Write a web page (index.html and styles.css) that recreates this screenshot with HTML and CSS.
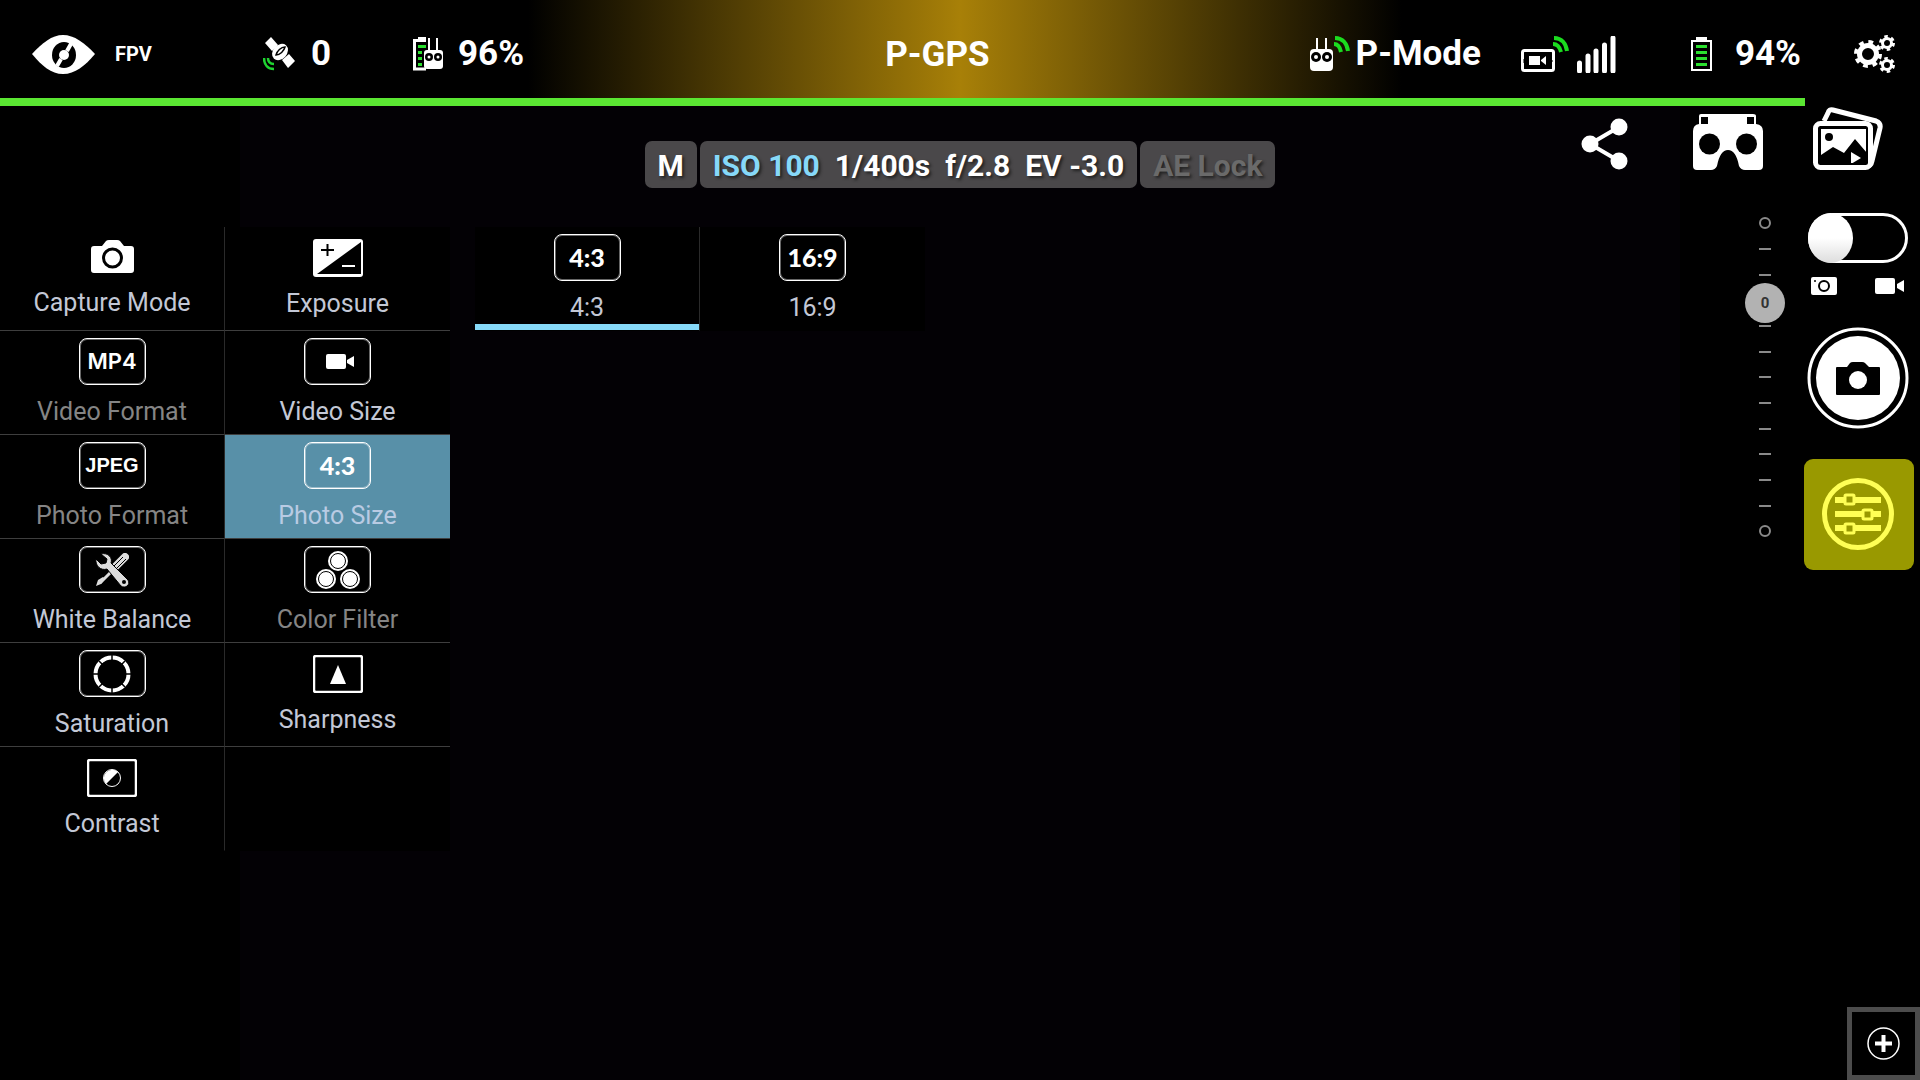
FILE: index.html
```html
<!DOCTYPE html>
<html lang="en">
<head>
<meta charset="utf-8">
<meta name="viewport" content="width=device-width, initial-scale=1">
<title>FPV</title>
<link rel="stylesheet" href="styles.css">
</head>
<body>
<header class="topbar">
    <div class="status left">
        <svg class="eye" width="63" height="39" viewBox="0 0 63 39">
            <path fill="#fff" d="M0 19C10 8 20 0 31 0s22 8 32 19C53 31 43 39 31 39S10 31 0 19z"/>
            <ellipse cx="32" cy="20" rx="12" ry="13"/>
            <path stroke="#fff" stroke-width="4" d="M25 31l4-7M35 16l5-9"/>
            <circle cx="32" cy="20" r="5" fill="#fff"/>
        </svg>
        <span class="fpv">FPV</span>
        <svg class="satellite" width="33" height="34" viewBox="0 0 33 34">
            <g fill="#fff">
                <path d="M2 6l6-6 7 8-6 6zM19 23l7-6 6 7-7 7z"/>
                <ellipse cx="17" cy="15" rx="9" ry="7" transform="rotate(-48 17 15)"/>
            </g>
            <path d="M13 18c1-4 5-8 9-8-1 4-5 8-9 8z" fill="#fff" stroke="#000" stroke-width="1.500"/>
            <path d="M5 21c0 4 2 6 6 6M1 21c0 7 4 11 10 11" fill="none" stroke="#1fd431" stroke-width="2.500"/>
        </svg>
        <span class="value">0</span>
        <svg class="remote" width="30" height="34" viewBox="0 0 30 34">
            <path d="M13 32H1.500V3.500H13" fill="none" stroke="#fff" stroke-width="3"/>
            <path d="M5 0h8v4H5zM15 1h2v13h-2zM23 1h2v13h-2z" fill="#fff"/>
            <path d="M5 8h8v3H5zM5 14h4v3H5zM5 20h4v3H5zM5 26h4v3H5z" fill="#2be02f"/>
            <rect x="11" y="13" width="19" height="19" rx="3" fill="#fff"/>
            <circle cx="16" cy="20" r="4"/><circle cx="25" cy="20" r="4"/>
            <circle cx="16" cy="20" r="1.500" fill="#fff"/><circle cx="25" cy="20" r="1.500" fill="#fff"/>
        </svg>
        <span class="value">96%</span>
    </div>
    <div class="value mode">P-GPS</div>
    <div class="status right">
        <svg class="rc" width="40" height="36" viewBox="0 0 40 36">
            <path d="M6 2h2v13H6zM15 2h2v13h-2z" fill="#fff"/>
            <rect x="0" y="13" width="23" height="22" rx="4" fill="#fff"/>
            <circle cx="6" cy="21" r="5"/><circle cx="17" cy="21" r="5"/>
            <circle cx="6" cy="21" r="2" fill="#fff"/><circle cx="17" cy="21" r="2" fill="#fff"/>
            <path d="M24 8c4 0 6 3 7 8M25 2c8 0 12 6 13 13" fill="none" stroke="#1bdc1f" stroke-width="4"/>
        </svg>
        <span class="value">P-Mode</span>
        <svg class="video-link" width="48" height="36" viewBox="0 0 48 36">
            <rect x="1.500" y="14.500" width="31" height="20" rx="2" fill="none" stroke="#fff" stroke-width="3"/>
            <path d="M8 20h11v9H8zM20 24l5-4v9l-5-4z" fill="#fff"/>
            <path d="M3 23v4M31 24v2" stroke="#000" stroke-width="1"/>
            <path d="M32 8c5 0 7 4 8 8M33 2c8 0 12 6 13 13" fill="none" stroke="#1bdc1f" stroke-width="4"/>
        </svg>
        <svg class="bars" width="39" height="37" viewBox="0 0 39 37">
            <path d="M2.500 27v8M11 20v15M19 15v20M27.500 9v26M36 2v33" stroke="#fff" stroke-width="5" stroke-linecap="round"/>
        </svg>
        <svg class="battery" width="21" height="34" viewBox="0 0 21 34">
            <path d="M5 0h11v3H5z" fill="#fff"/>
            <rect x="1" y="4" width="19" height="29" fill="none" stroke="#fff" stroke-width="2"/>
            <path d="M5 8h11v3H5zM5 14h11v3H5zM5 20h11v3H5zM5 26h11v3H5z" fill="#2be02f"/>
        </svg>
        <span class="value">94%</span>
        <button class="icon-btn settings" type="button" aria-label="Settings">
            <svg width="42" height="38" viewBox="0 0 42 38" fill="none" stroke="#fff">
                <circle cx="14" cy="19" r="8.500" stroke-width="5"/>
                <circle cx="14" cy="19" r="12" stroke-width="4" stroke-dasharray="4.712"/>
                <circle cx="33" cy="8" r="4.500" stroke-width="3"/>
                <circle cx="33" cy="8" r="6.500" stroke-width="3" stroke-dasharray="3.403"/>
                <circle cx="33" cy="30" r="4.500" stroke-width="3"/>
                <circle cx="33" cy="30" r="6.500" stroke-width="3" stroke-dasharray="3.403"/>
            </svg>
        </button>
    </div>
</header>
<div class="charge"><div class="charge-level" style="width: 94%"></div></div>

<main class="view">
    <div class="camera-info">
        <button class="info-box" type="button">M</button>
        <div class="info-box info-values">
            <span class="iso">ISO 100</span>
            <span>1/400s</span>
            <span>f/2.8</span>
            <span>EV -3.0</span>
        </div>
        <button class="info-box lock" type="button" disabled>AE Lock</button>
    </div>

    <div class="shortcuts">
        <button class="icon-btn share" type="button" aria-label="Share">
            <svg width="47" height="52" viewBox="0 0 47 52" fill="#fff">
                <path d="M38 9L9 26l29 17" fill="none" stroke="#fff" stroke-width="4"/>
                <circle cx="38" cy="9" r="8.500"/><circle cx="9" cy="26" r="8.500"/><circle cx="38" cy="43" r="8.500"/>
            </svg>
        </button>
        <button class="icon-btn" type="button" aria-label="VR goggles">
            <svg width="70" height="56" viewBox="0 0 70 56">
                <path fill="#fff" d="M6 2q0-2 2-2h52q3 0 3 2v8q7 1 7 7v35q0 4-4 4H52q-4 0-6-4-3-16-11-16t-11 16q-2 4-6 4H4q-4 0-4-4V17q0-6 6-7z"/>
                <path d="M8 3h7v7H8zM54 3h7v7h-7z"/>
                <circle cx="16.500" cy="30" r="10.500"/><circle cx="53.500" cy="30" r="10.500"/>
            </svg>
        </button>
        <button class="icon-btn" type="button" aria-label="Gallery">
            <svg width="70" height="63" viewBox="0 0 70 63" fill="none" stroke="#fff">
                <path stroke-width="5" d="M11 14l4-8q1-4 5-3l43 11q5 2 4 7l-8 33q-1 5-5 5"/>
                <rect x="2.500" y="16.500" width="55" height="44" rx="5" fill="#000" stroke-width="5"/>
                <path fill="#fff" stroke="none" d="M8 22h46v24L42 32 31 46l-11-6-12 8z"/>
                <circle cx="16" cy="30" r="4" fill="#000" stroke="none"/>
                <path fill="#fff" stroke="none" d="M38 45l10 6-10 6z"/>
                <rect x="6.500" y="20.500" width="47" height="36" rx="1" stroke="#000"/>
            </svg>
        </button>
    </div>

    <nav class="menu">
        <button class="cell" type="button">
            <svg width="43" height="36" viewBox="0 0 43 36">
                <path fill="#fff" d="M11 6l4-5q1-1 3-1h8q2 0 3 1l4 5h7q3 0 3 3v21q0 3-3 3H3q-3 0-3-3V9q0-3 3-3z"/>
                <circle cx="21.500" cy="18" r="9" fill="none" stroke="#000" stroke-width="3"/>
            </svg>
            <span>Capture Mode</span>
        </button>
        <button class="cell" type="button">
            <svg width="50" height="38" viewBox="0 0 50 38">
                <rect width="50" height="38" rx="3" fill="#fff"/>
                <path d="M4 35L48 3v32z"/>
                <path d="M8 11h13M14.500 5v12" stroke="#000" stroke-width="2"/>
                <path d="M29 27h13" stroke="#fff" stroke-width="2"/>
            </svg>
            <span>Exposure</span>
        </button>
        <button class="cell" type="button" disabled>
            <span class="badge mp4">MP4</span>
            <span>Video Format</span>
        </button>
        <button class="cell" type="button">
            <span class="badge">
                <svg class="cam" width="28" height="15" viewBox="0 0 28 15" fill="#fff"><rect width="20" height="15" rx="2"/><path d="M21 6l7-4v11l-7-4z"/></svg>
            </span>
            <span>Video Size</span>
        </button>
        <button class="cell" type="button" disabled>
            <span class="badge jpeg">JPEG</span>
            <span>Photo Format</span>
        </button>
        <button class="cell selected" type="button">
            <span class="badge">4:3</span>
            <span>Photo Size</span>
        </button>
        <button class="cell" type="button">
            <span class="badge">
                <svg width="34" height="34" viewBox="0 0 34 34">
                    <path d="M31 4L5 30" stroke="#ddd" stroke-width="3"/>
                    <path d="M30 4L20 14" stroke="#ddd" stroke-width="8" stroke-linecap="round"/>
                    <path d="M28 4L18 14M31 6L21 16" stroke="#000" stroke-width="1"/>
                    <path d="M1 33l2-6 5-3 2 2-4 5z" fill="#ddd"/>
                    <path fill="#ddd" stroke="#000" stroke-width="1" d="M6 1c7-2 12 4 10 9l17 17c3 5-3 9-7 6L12 16C6 18 0 13 1 6l5 5 5-1 1-4z"/>
                    <circle cx="29" cy="29" r="2"/>
                </svg>
            </span>
            <span>White Balance</span>
        </button>
        <button class="cell" type="button" disabled>
            <span class="badge">
                <svg width="44" height="38" viewBox="0 0 44 38" fill="#fff" stroke="#000">
                    <g stroke="none"><circle cx="22" cy="10" r="10"/><circle cx="10" cy="28" r="10"/><circle cx="34" cy="28" r="10"/></g>
                    <circle cx="22" cy="10" r="7.500"/><circle cx="10" cy="28" r="7.500"/><circle cx="34" cy="28" r="7.500"/>
                </svg>
            </span>
            <span>Color Filter</span>
        </button>
        <button class="cell" type="button">
            <span class="badge">
                <svg width="38" height="38" viewBox="0 0 38 38">
                    <circle cx="19" cy="19" r="16.500" fill="none" stroke="#fff" stroke-width="4"/>
                    <path d="M19 0v38M0 19h38M6 6l26 26M32 6L6 32" stroke="#000" stroke-width="1.500"/>
                    <circle cx="19" cy="19" r="14"/>
                </svg>
            </span>
            <span>Saturation</span>
        </button>
        <button class="cell" type="button">
            <svg width="50" height="38" viewBox="0 0 50 38">
                <rect x="1" y="1" width="48" height="36" rx="2" fill="none" stroke="#fff" stroke-width="2.500"/>
                <path d="M25 10l8 19H17z" fill="#fff"/>
            </svg>
            <span>Sharpness</span>
        </button>
        <button class="cell" type="button">
            <svg width="50" height="38" viewBox="0 0 50 38">
                <rect x="1" y="1" width="48" height="36" rx="2" fill="none" stroke="#fff" stroke-width="2.500"/>
                <circle cx="25" cy="19" r="8.500" fill="none" stroke="#fff"/>
                <path d="M19 25a8.500 8.500 0 0 1 12-12z" fill="#fff"/>
            </svg>
            <span>Contrast</span>
        </button>
        <div class="cell"></div>
    </nav>

    <div class="options">
        <button class="cell current" type="button">
            <span class="badge">4:3</span>
            <span>4:3</span>
        </button>
        <button class="cell" type="button">
            <span class="badge">16:9</span>
            <span>16:9</span>
        </button>
    </div>

    <div class="gimbal">
        <svg width="12" height="320" viewBox="0 0 12 320" fill="none" stroke="#8a8a8a" stroke-width="2">
            <circle cx="6" cy="6" r="5"/>
            <path d="M0 32h12M0 58h12M0 83h12M0 109h12M0 135h12M0 160h12M0 186h12M0 212h12M0 237h12M0 263h12M0 289h12"/>
            <circle cx="6" cy="314" r="5"/>
        </svg>
        <input class="gimbal-range" type="range" min="0" max="100" value="26" aria-label="Gimbal pitch">
        <output class="gimbal-value">0</output>
    </div>

    <div class="capture">
        <input class="switch" type="checkbox" id="videoMode" aria-label="Video mode">
        <label class="switch-icons" for="videoMode">
            <svg width="26" height="18" viewBox="0 0 26 18">
                <rect width="26" height="18" rx="2" fill="#fff"/>
                <circle cx="13" cy="9" r="5" fill="none" stroke="#000" stroke-width="2"/>
                <circle cx="4" cy="4" r="1"/>
            </svg>
            <svg width="30" height="16" viewBox="0 0 30 16" fill="#fff"><rect width="20" height="16" rx="2"/><path d="M22 6l7-4v12l-7-4z"/></svg>
        </label>
        <button class="icon-btn shutter" type="button" aria-label="Take photo">
            <svg width="102" height="102" viewBox="0 0 102 102">
                <circle cx="51" cy="51" r="49" fill="none" stroke="#fff" stroke-width="3"/>
                <circle cx="51" cy="51" r="42" fill="#fff"/>
                <path d="M40 40l3-4q1-1 3-1h9q2 0 3 1l4 4h10q1 0 1 1v26q0 1-1 1H30q-1 0-1-1V41q0-1 1-1z"/>
                <circle cx="51" cy="53" r="9" fill="#fff"/>
            </svg>
        </button>
        <button class="icon-btn adjust" type="button" aria-label="Camera settings">
            <svg width="72" height="72" viewBox="0 0 72 72" fill="none" stroke="#ff5">
                <circle cx="36" cy="36" r="33.500" stroke-width="5"/>
                <path d="M13 22h46M13 36h46M13 50h46" stroke-width="6"/>
                <g fill="#990" stroke-width="3">
                    <rect x="23" y="17" width="9" height="9" rx="1"/>
                    <rect x="41" y="32" width="9" height="9" rx="1"/>
                    <rect x="23" y="46" width="9" height="9" rx="1"/>
                </g>
            </svg>
        </button>
    </div>

    <button class="add" type="button" aria-label="Add widget">
        <svg width="33" height="33" viewBox="0 0 33 33" fill="none" stroke="#fff">
            <circle cx="16.500" cy="16.500" r="15.500" stroke-width="1.500"/>
            <path d="M16.500 8v17M8 16.500h17" stroke-width="4"/>
        </svg>
    </button>
</main>
</body>
</html>
```

FILE: styles.css
```css
html {
    height: 100%;
}

body {
    margin: 0;
    min-height: 100%;
    display: flex;
    flex-direction: column;
    background: #000;
    color: #fff;
    font-family: Roboto, Arial, sans-serif;
}

button {
    margin: 0;
    padding: 0;
    border: 0;
    background: none;
    color: inherit;
    font: inherit;
}

svg {
    display: block;
}

/* status bar */
.topbar {
    height: 98px;
    display: grid;
    grid-template-columns: 46% 1fr auto;
    align-items: center;
    background: linear-gradient(to right, #000 27.5%, #a88008 50%, #000 73%);
}

.status {
    display: flex;
    align-items: center;
    padding-top: 10px;
}

.value {
    font-size: 35px;
    line-height: 40px;
    font-weight: 700;
}

.mode {
    padding: 12px 0 0 2px;
}

.fpv {
    font-size: 20px;
    font-weight: 700;
    margin: 0 111px 0 20px;
}

.eye {
    margin-left: 32px;
}

.satellite {
    margin-right: 15px;
}

.remote {
    margin: 0 15px 0 82px;
}

.rc {
    margin-right: 6px;
}

.video-link {
    margin: 0 8px 0 40px;
}

.battery {
    margin: 0 23px 0 75px;
}

.settings {
    margin: 0 24px 0 53px;
}

.charge {
    height: 8px;
}

.charge-level {
    height: 8px;
    background: #5ae632;
}

.view {
    flex: 1;
    position: relative;
    display: grid;
    grid-template-columns: 450px 450px 1fr auto auto;
    grid-template-rows: 121px 1fr auto;
    column-gap: 25px;
    background: linear-gradient(to right, #000 12.5%, #030105 12.5%, #030105 87.5%, #000 87.5%);
}

/* exposure values */
.camera-info {
    grid-column: 1 / -1;
    grid-row: 1;
    display: flex;
    justify-content: center;
    align-items: flex-start;
    gap: 3px;
    padding-top: 35px;
}

.info-box {
    height: 47px;
    box-sizing: border-box;
    padding: 0 13px;
    border-radius: 7px;
    background: #4a484a;
    font-size: 30px;
    line-height: 49px;
    font-weight: 700;
    text-shadow: 2px 2px 3px #222;
}

.info-values {
    display: flex;
    gap: 15px;
}

.iso {
    color: #86d9f9;
}

.lock {
    color: #6a6a6a;
}

.shortcuts {
    grid-column: 3 / -1;
    grid-row: 1;
    justify-self: end;
    align-self: start;
    display: flex;
    align-items: flex-end;
    gap: 50px;
    padding: 1px 37px 0 0;
}

.share {
    margin-right: 15px;
}

/* camera menu */
.menu,
.options {
    display: grid;
    grid-template-columns: 1fr 1fr;
    grid-auto-rows: 104px;
    align-content: start;
    grid-row: 2;
}

.cell {
    display: flex;
    flex-direction: column;
    justify-content: center;
    align-items: center;
    gap: 11px;
    border-bottom: 1px solid #3e3e3e;
    background: #000;
    color: #c3c8d6;
    font-size: 25px;
    line-height: 31px;
}

.cell:nth-child(odd) {
    border-right: 1px solid #2a2a2a;
}

.cell:nth-last-child(-n+2) {
    border-bottom-color: transparent;
}

.cell:disabled {
    color: #858585;
}

.selected {
    background: #5890a8;
    color: #b9cbe3;
}

.options .current {
    box-shadow: inset 0 -6px #86d9f9;
}

.badge {
    width: 67px;
    height: 47px;
    box-sizing: border-box;
    display: flex;
    justify-content: center;
    align-items: center;
    border: 1px solid #fff;
    border-radius: 8px;
    box-shadow: inset 0 0 0 1px rgba(255, 255, 255, 0.4);
    color: #fff;
    font-family: Lato, sans-serif;
    font-size: 25px;
    font-weight: 900;
}

.mp4 {
    font-family: Inter, sans-serif;
    font-size: 22px;
    font-weight: 600;
}

.jpeg {
    font-family: "Liberation Sans", Arial, sans-serif;
    font-size: 20px;
    font-weight: 700;
}

.cam {
    margin-left: 5px;
}

/* gimbal pitch */
.gimbal {
    grid-column: 4;
    grid-row: 1 / 3;
    position: relative;
    width: 40px;
    height: 320px;
    margin-top: 111px;
    display: flex;
    justify-content: center;
}

.gimbal-range {
    position: absolute;
    top: -14px;
    left: 0;
    width: 40px;
    height: 348px;
    margin: 0;
    appearance: none;
    -webkit-appearance: none;
    writing-mode: vertical-lr;
    background: none;
}

.gimbal-range::-webkit-slider-thumb {
    -webkit-appearance: none;
    width: 40px;
    height: 40px;
    border-radius: 50%;
    background: #b2b2b2;
}

.gimbal-value {
    position: absolute;
    top: 66px;
    left: 0;
    width: 40px;
    line-height: 40px;
    text-align: center;
    font-size: 15px;
    font-weight: 700;
    color: #333;
    pointer-events: none;
}

.capture {
    grid-column: 5;
    grid-row: 1 / 3;
    width: 110px;
    box-sizing: border-box;
    margin: 107px 6px 0 -6px;
    padding-right: 3px;
    display: flex;
    flex-direction: column;
    align-items: center;
}

.switch {
    appearance: none;
    -webkit-appearance: none;
    width: 100px;
    height: 50px;
    box-sizing: border-box;
    margin: 0;
    border: 3px solid #fff;
    border-radius: 25px;
}

.switch::before {
    content: "";
    display: block;
    width: 45px;
    height: 50px;
    margin: -3px;
    border-radius: 50%;
    background: linear-gradient(#fff 50%, #ddd);
}

.switch:checked::before {
    margin-left: 52px;
}

.switch-icons {
    width: 94px;
    display: flex;
    justify-content: space-between;
    align-items: center;
    margin: 14px 0 32px;
}

.adjust {
    align-self: flex-start;
    width: 110px;
    height: 111px;
    box-sizing: border-box;
    display: flex;
    justify-content: center;
    align-items: center;
    margin-top: 30px;
    padding: 0 2px 2px 0;
    border-radius: 9px;
    background: #990;
}

.add {
    grid-column: 4 / -1;
    grid-row: 3;
    justify-self: end;
    width: 73px;
    height: 73px;
    box-sizing: border-box;
    display: flex;
    justify-content: center;
    align-items: center;
    border: 5px solid #4c4c4c;
    background: #000;
}
```
